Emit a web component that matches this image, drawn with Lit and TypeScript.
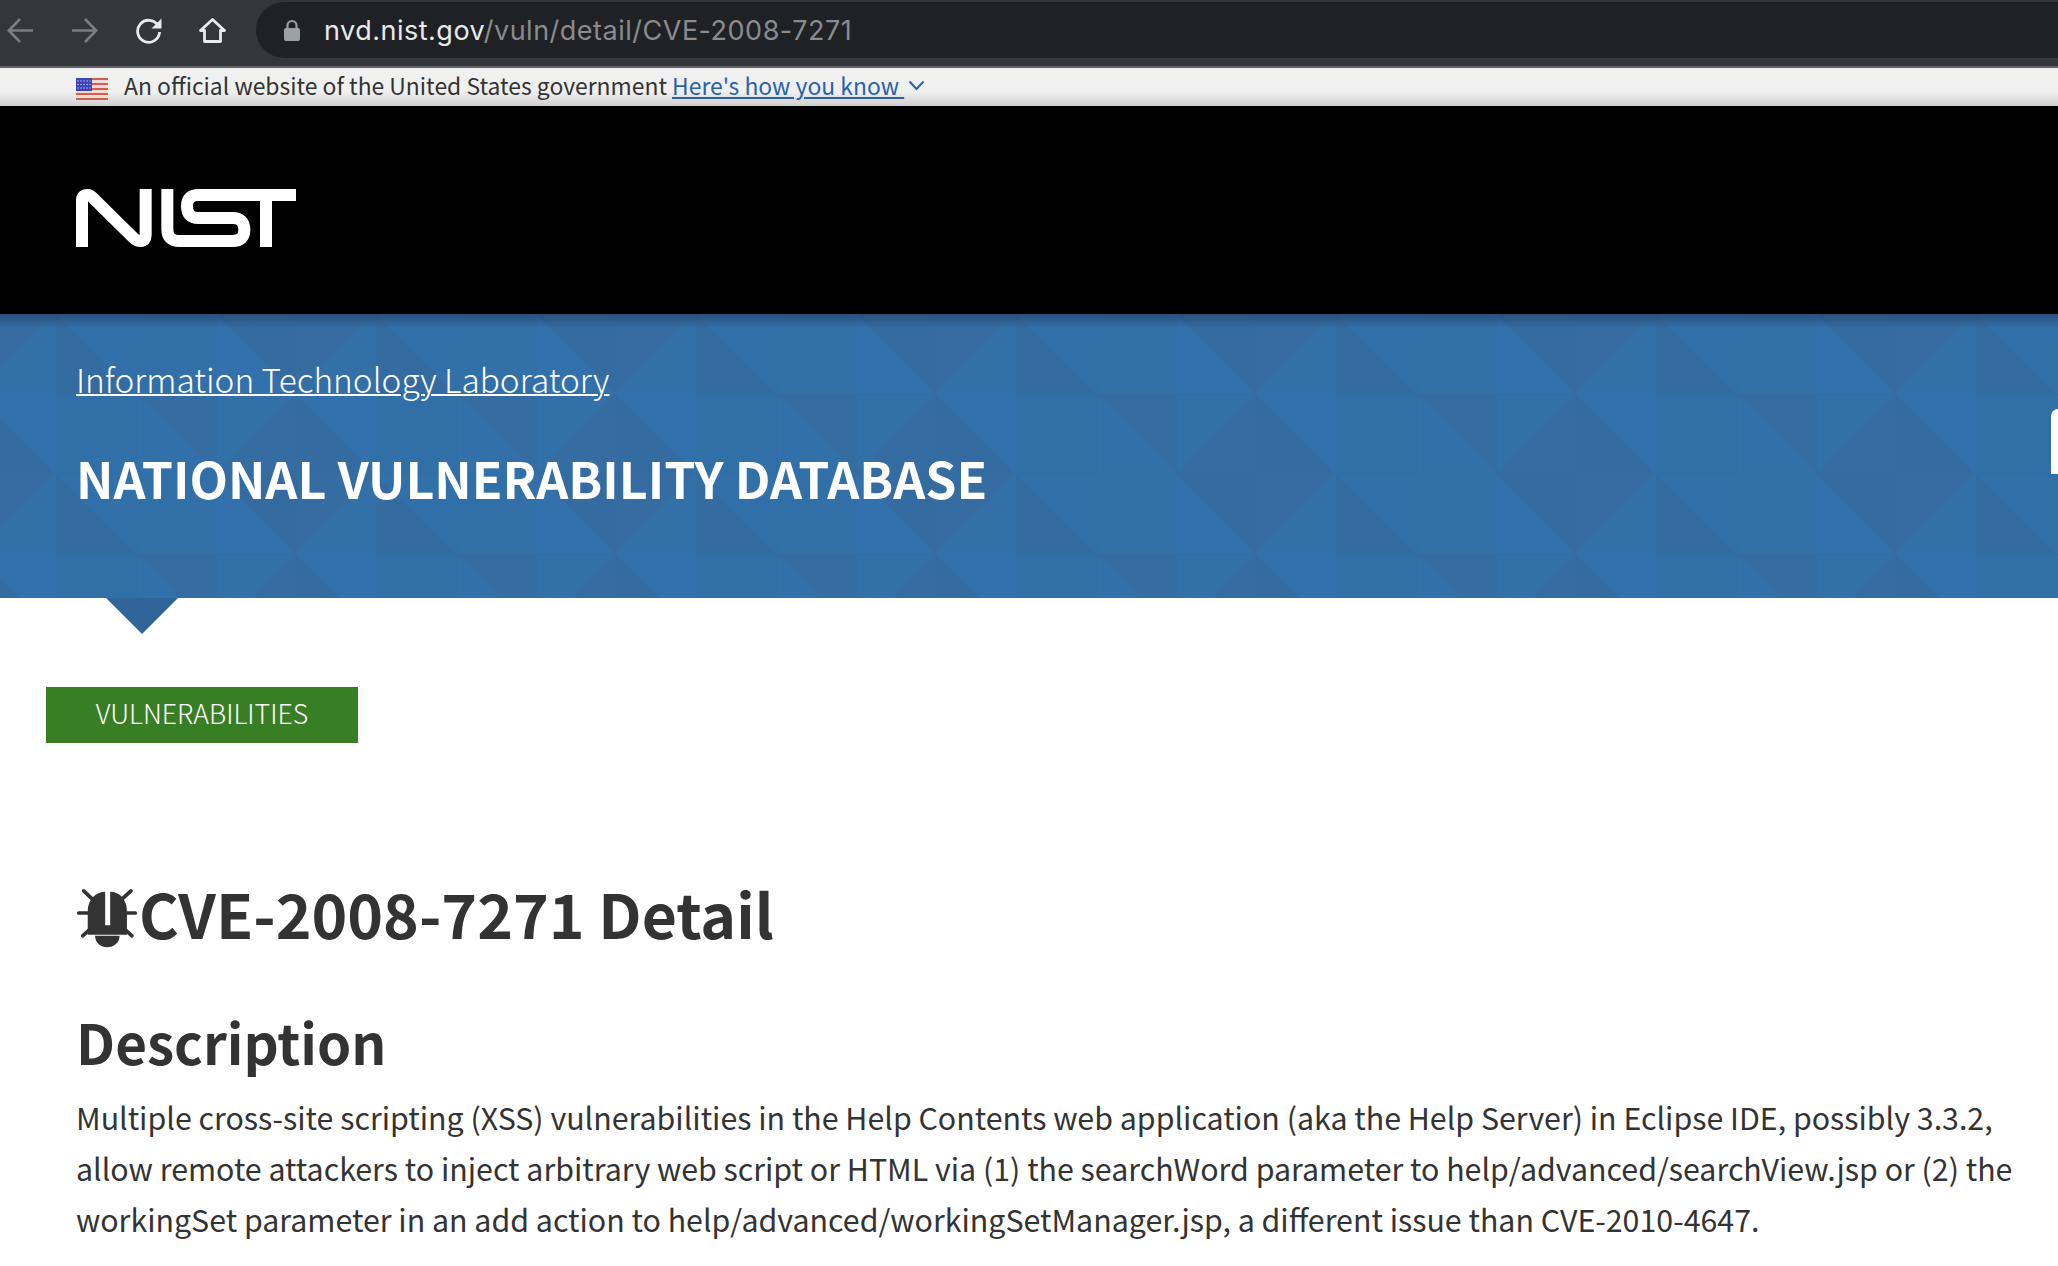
import { LitElement, html, css, svg } from "lit";
import { customElement } from "lit/decorators.js";

const DARK = "#346ca1", DARK2 = "#356da3", MID = "#3270a7", LIGHT = "#3371ad", LIGHT2 = "#3270a9";

// one 320x160 tile of the triangle wallpaper: [points, fill]
const tri: [string, string][] = [
  // row 0
  ["0,0 0,80 80,80", LIGHT], ["0,0 80,0 80,80", DARK],
  ["80,0 80,80 160,0", DARK2], ["160,0 160,80 80,80", MID],
  ["160,0 160,80 240,80", DARK], ["160,0 240,0 240,80", LIGHT2],
  ["240,0 240,80 320,0", "#3170a7"], ["320,0 320,80 240,80", "#3270a7"],
  // row 1
  ["0,80 0,160 80,80", MID], ["80,80 80,160 0,160", DARK2],
  ["80,80 80,160 160,160", DARK], ["80,80 160,80 160,160", LIGHT],
  ["160,80 160,160 240,80", "#3170a7"], ["240,80 240,160 160,160", "#3170a6"],
  ["240,80 240,160 320,160", LIGHT2], ["240,80 320,80 320,160", DARK2],
];

@customElement("app-root")
export class AppRoot extends LitElement {
  static styles = css`
    :host { display: block; width: 2058px; height: 1266px; overflow: hidden; background: #fff;
      font-family: "Noto Sans CJK SC", "Liberation Sans", sans-serif; color: #333; }
    .chrome { height: 68px; background: #35363a; display: flex; align-items: center; border-bottom: 2px solid #5f6165; box-sizing: border-box; padding: 2px 0 8px; }
    .nav { display: flex; align-items: center; gap: 37px; padding-left: 7px; width: 256px; box-sizing: border-box; }
    .nav svg { display: block; width: 27px; height: 27px; flex: none; }
    .omni { flex: 1; height: 56px; background: #202124; border-radius: 28px 0 0 28px; display: flex; align-items: center; padding-left: 27px; gap: 23px; }
    .omni svg { width: 18px; height: 22px; flex: none; }
    .url { font: 400 27px/1 Inter, Roboto, sans-serif; letter-spacing: .5px; color: #8a8b8e; white-space: nowrap; }
    .url b { font-weight: 400; color: #e8eaed; }
    .gov { height: 38px; background: linear-gradient(#f0f0f0 0, #f0f0f0 62%, #cfcfcf 100%); display: flex; align-items: center; padding: 0 0 4px 76px; box-sizing: border-box; font-size: 22.9px; color: #333; white-space: pre; }
    .gov .flag { width: 32px; height: 22px; margin: 8px 16px 0 0; flex: none; }
    .gov a { color: #2a62a8; text-decoration: underline; margin-left: 5px; }
    .gov .chev { width: 17px; height: 11px; margin-left: 4px; flex: none; }
    .black { height: 208px; background: #000; padding: 83px 0 0 76px; box-sizing: border-box; }
    .black svg { display: block; width: 220px; height: 58px; }
    .hero { position: relative; height: 284px; background: #326fa8; overflow: hidden; box-sizing: border-box; padding: 39px 0 0 76px; color: #fff; }
    .hero .wall { position: absolute; inset: 0; width: 100%; height: 100%; }
    .hero .shade { position: absolute; left: 0; right: 0; top: 0; height: 14px; background: linear-gradient(rgba(30,50,80,.5), rgba(30,50,80,0)); }
    .lab, .title { position: relative; }
    .lab { display: block; font-size: 33.4px; line-height: 52px; font-weight: 300; color: #fff; text-decoration: underline; text-decoration-thickness: 2px; width: max-content; }
    .title { margin: 42px 0 0; font-size: 50px; line-height: 60px; font-weight: 700; text-transform: uppercase; }
    .tab { position: absolute; right: 0; top: 95px; width: 7px; height: 65px; background: #fff; border-radius: 8px 0 0 0; }
    .notch { width: 72px; height: 36px; margin-left: 106px; background: #2f6498; clip-path: polygon(0 0, 100% 0, 50% 100%); }
    .pill { margin: 53px 0 0 46px; width: 312px; height: 56px; box-sizing: border-box; padding-bottom: 5px; background: #387e25; color: #fff; display: flex; align-items: center; justify-content: center; font-size: 26.7px; font-weight: 300; }
    main { padding: 133px 0 0 76px; }
    h1 { margin: 0; display: flex; align-items: center; font-size: 60.700px; line-height: 74px; font-weight: 700; color: #333; white-space: nowrap; }
    h1 svg { width: 62px; height: 64px; flex: none; margin: 10px 1px 0 0; }
    h2 { margin: 58px 0 0; font-size: 54.800px; line-height: 66px; font-weight: 700; color: #333; }
    p { margin: 18px 0 0; font-size: 30.350px; line-height: 51px; font-weight: 400; color: #333; white-space: nowrap; }
  `;

  render() {
    return html`
      <div class="chrome">
        <div class="nav">
          <svg viewBox="0 0 27 27" fill="none" stroke="#7c7d80" stroke-width="2.6"><path d="M26 13.500H2M13 2 1.800 13.500 13 25"/></svg>
          <svg viewBox="0 0 27 27" fill="none" stroke="#7c7d80" stroke-width="2.6"><path d="M1 13.500h24M14 2l11.200 11.500L14 25"/></svg>
          <svg viewBox="0 0 27 27"><path fill="none" stroke="#e8eaed" stroke-width="2.800" d="M23 8.500A11 11 0 1 0 24.600 15"/><path fill="#e8eaed" d="M26.500 1.500V11.500H16.500Z"/></svg>
          <svg viewBox="0 0 27 27" fill="none" stroke="#e8eaed" stroke-width="2.800" stroke-linejoin="round"><path d="M1.500 13.500 13.500 2.500 25.500 13.500H21.500V24.500H5.500V13.500Z"/></svg>
        </div>
        <div class="omni">
          <svg viewBox="0 0 18 22"><path fill="none" stroke="#9aa0a6" stroke-width="2.200" d="M4.500 10V6.500a4.500 4.500 0 0 1 9 0V10"/><rect x="1" y="9" width="16" height="13" rx="2" fill="#9aa0a6"/></svg>
          <span class="url"><b>nvd.nist.gov</b>/vuln/detail/CVE-2008-7271</span>
        </div>
      </div>
      <div class="gov"><svg class="flag" viewBox="0 0 32 22" preserveAspectRatio="none">
          <rect width="32" height="22" fill="#f3dcd6"/>
          <path fill="#d0604c" d="M0 0h32v2H0zM0 5h32v2H0zM0 10h32v2H0zM0 15h32v2H0zM0 20h32v2H0z"/>
          <rect width="16" height="13" fill="#3c45b8"/>
          <path stroke="#dfe2f5" stroke-width="1.200" stroke-dasharray="1.200 1.800" d="M1.500 3h13M1.500 6.500h13M1.500 10h13"/>
        </svg><span>An official website of the United States government</span><a href="#">Here's how you know&nbsp;</a><svg class="chev" viewBox="0 0 17 11" fill="none" stroke="#2a62a8" stroke-width="2"><path d="M1.500 1.500 8.500 9l7-7.500"/></svg></div>
      <div class="black">
        <svg viewBox="78 58 660 174" preserveAspectRatio="none" fill="none" stroke="#fff" stroke-width="36">
          <path d="M96 232V92Q96 76 112 76Q122 76 130 86L250 204Q260 214 272 214Q287 214 287 196V58"/>
          <path d="M352 58V178Q352 214 388 214H548Q583 214 583 180Q583 145 548 145H445Q411 145 411 110Q411 76 445 76H738"/>
          <path d="M648 76V232"/>
        </svg>
      </div>
      <div class="hero">
        <svg class="wall" aria-hidden="true">
          <defs>
            <pattern id="tile" x="216" y="0" width="320" height="160" patternUnits="userSpaceOnUse">
              ${tri.map(([p, f]) => svg`<polygon points=${p} fill=${f} stroke=${f} stroke-width=".4"/>`)}
              <path d="M.5 0V160M80.500 0V160M160.500 0V160M240.500 0V160M0 80.500H320M0 .5H320" stroke="#1d4f86" stroke-opacity=".03" fill="none"/>
            </pattern>
          </defs>
          <rect width="100%" height="100%" fill="url(#tile)"/>
        </svg>
        <div class="shade"></div>
        <a class="lab" href="#">Information Technology Laboratory</a>
        <h3 class="title">National Vulnerability Database</h3>
        <div class="tab"></div>
      </div>
      <div class="notch"></div>
      <div class="pill">VULNERABILITIES</div>
      <main>
        <h1>
          <svg viewBox="110 85 185 180" fill="#333">
            <path d="M145 225V155C145 120 170 97 197 97V197H212V97C240 97 262 120 262 155V225Z"/>
            <path d="M167 228H240C240 250 222 262 203 262C184 262 167 250 167 228Z"/>
            <path fill="none" stroke="#333" stroke-width="11" stroke-linecap="round" d="M118 160H145M262 160H287M133 94 158 118M274 94 248 118M130 228 152 208M277 228 255 208"/>
          </svg>
          CVE-2008-7271 Detail
        </h1>
        <h2>Description</h2>
        <p>Multiple cross-site scripting (XSS) vulnerabilities in the Help Contents web application (aka the Help Server) in Eclipse IDE, possibly 3.3.2,<br>allow remote attackers to inject arbitrary web script or HTML via (1) the searchWord parameter to help/advanced/searchView.jsp or (2) the<br>workingSet parameter in an add action to help/advanced/workingSetManager.jsp, a different issue than CVE-2010-4647.</p>
      </main>
    `;
  }
}
